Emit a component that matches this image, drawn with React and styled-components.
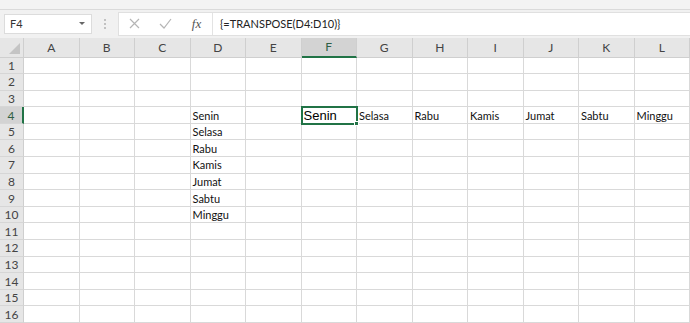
import React from "react";
import styled, { createGlobalStyle } from "styled-components";

const Global = createGlobalStyle`
  html, body { margin: 0; padding: 0; background: #fff; }
  body { width: 690px; height: 323px; overflow: hidden; font-family: "Lato", "Open Sans", sans-serif; }
`;

const Page = styled.div`
  width: 690px;
  height: 323px;
  display: flex;
  flex-direction: column;
  overflow: hidden;
`;

const RibbonEdge = styled.div`
  height: 9px;
  background: #f3f3f3;
  border-bottom: 1px solid #dadada;
`;

const FormulaRow = styled.div`
  height: 28px;
  background: #f1f1f1;
  display: flex;
  align-items: center;
  padding: 0 0 0 4px;
  box-sizing: border-box;
`;

const NameBox = styled.div`
  width: 88px;
  height: 20px;
  flex-shrink: 0;
  box-sizing: border-box;
  background: #fff;
  border: 1px solid #dcdcdc;
  display: flex;
  align-items: center;
  justify-content: space-between;
  padding: 0 6px 0 5px;
  font-family: "Lato", sans-serif;
  font-size: 11px;
  color: #333;
`;

const Caret = styled.span`
  width: 0;
  height: 0;
  border-left: 3px solid transparent;
  border-right: 3px solid transparent;
  border-top: 3px solid #666;
`;

const Grip = styled.div`
  width: 26px;
  flex-shrink: 0;
  display: flex;
  flex-direction: column;
  align-items: center;
  gap: 2px;
  & > span { width: 2px; height: 2px; background: #b0b0b0; border-radius: 1px; }
`;

const FormulaBox = styled.div`
  flex: 1;
  height: 22px;
  background: #fff;
  border: 1px solid #e0e0e0;
  border-right: none;
  display: flex;
  align-items: center;
`;

const IconSlot = styled.div`
  width: 31px;
  flex-shrink: 0;
  height: 100%;
  display: flex;
  align-items: center;
  justify-content: center;
  color: #b9b9b9;
`;

const Fx = styled.span`
  font-family: "Liberation Serif", serif;
  font-style: italic;
  font-size: 13px;
  color: #555;
`;

const FormulaText = styled.div`
  border-left: 1px solid #e3e3e3;
  height: 100%;
  display: flex;
  align-items: center;
  padding-left: 7px;
  font-family: "Lato", sans-serif;
  font-size: 11px;
  color: #222;
`;

const Sheet = styled.div`
  display: grid;
  grid-template-columns: 24px repeat(12, 55.5px);
  grid-template-rows: 20px repeat(16, 16.6px);
`;

const Corner = styled.div`
  background: #e6e6e6;
  border-right: 1px solid #cfcfcf;
  border-bottom: 1px solid #cfcfcf;
  box-sizing: border-box;
  position: relative;
  &::after {
    content: "";
    position: absolute;
    right: 3px;
    bottom: 3px;
    width: 0;
    height: 0;
    border-left: 11px solid transparent;
    border-bottom: 11px solid #c4c4c4;
  }
`;

const ColHead = styled.div`
  background: ${p => (p.$active ? "#d3d3d3" : "#e6e6e6")};
  border-right: 1px solid #cfcfcf;
  border-bottom: ${p => (p.$active ? "2px solid #217346" : "1px solid #cfcfcf")};
  box-sizing: border-box;
  display: flex;
  align-items: center;
  justify-content: center;
  font-family: "Lato", sans-serif;
  font-size: 12px;
  color: ${p => (p.$active ? "#2f5f45" : "#444")};
`;

const RowHead = styled.div`
  background: ${p => (p.$active ? "#d3d3d3" : "#e6e6e6")};
  border-right: ${p => (p.$active ? "2px solid #217346" : "1px solid #cfcfcf")};
  border-bottom: 1px solid #d6d6d6;
  box-sizing: border-box;
  display: flex;
  align-items: center;
  justify-content: center;
  font-family: "Lato", sans-serif;
  font-size: 12px;
  color: ${p => (p.$active ? "#2f5f45" : "#444")};
`;

const Cell = styled.div`
  border-right: 1px solid #d9d9d9;
  border-bottom: 1px solid #d9d9d9;
  box-sizing: border-box;
  display: flex;
  align-items: center;
  padding-left: 2px;
  font-family: "Lato", "Open Sans", sans-serif;
  font-size: 11px;
  color: #111;
  white-space: nowrap;
  position: relative;
`;

const ActiveCell = styled(Cell)`
  outline: 2px solid #217346;
  outline-offset: -1px;
  z-index: 2;
  font-family: "Liberation Sans", Arial, sans-serif;
  font-size: 13px;
  color: #000;
  &::after {
    content: "";
    position: absolute;
    right: -3px;
    bottom: -3px;
    width: 5px;
    height: 5px;
    background: #217346;
    border: 1px solid #fff;
    box-sizing: border-box;
  }
`;

const cols = ["A", "B", "C", "D", "E", "F", "G", "H", "I", "J", "K", "L"];
const days = ["Senin", "Selasa", "Rabu", "Kamis", "Jumat", "Sabtu", "Minggu"];

function cellValue(r, c) {
  if (c === 3 && r >= 4 && r <= 10) return days[r - 4];
  if (r === 4 && c >= 5) return days[c - 5];
  return "";
}

export default function App() {
  const rows = Array.from({ length: 16 }, (_, i) => i + 1);
  return (
    <Page>
      <Global />
      <RibbonEdge />
      <FormulaRow>
        <NameBox>
          <span>F4</span>
          <Caret />
        </NameBox>
        <Grip>
          <span />
          <span />
          <span />
        </Grip>
        <FormulaBox>
          <IconSlot>
            <svg width="11" height="11" viewBox="0 0 11 11">
              <path d="M1 1 L10 10 M10 1 L1 10" stroke="#b5b5b5" strokeWidth="1.2" fill="none" />
            </svg>
          </IconSlot>
          <IconSlot>
            <svg width="13" height="11" viewBox="0 0 13 11">
              <path d="M1 6 L5 10 L12 1" stroke="#b5b5b5" strokeWidth="1.2" fill="none" />
            </svg>
          </IconSlot>
          <IconSlot>
            <Fx>fx</Fx>
          </IconSlot>
          <FormulaText>{"{=TRANSPOSE(D4:D10)}"}</FormulaText>
        </FormulaBox>
      </FormulaRow>
      <Sheet>
        <Corner />
        {cols.map((c, i) => (
          <ColHead key={c} $active={i === 5}>
            {c}
          </ColHead>
        ))}
        {rows.map(r => (
          <React.Fragment key={r}>
            <RowHead $active={r === 4}>{r}</RowHead>
            {cols.map((c, ci) =>
              r === 4 && ci === 5 ? (
                <ActiveCell key={c}>{cellValue(r, ci)}</ActiveCell>
              ) : (
                <Cell key={c}>{cellValue(r, ci)}</Cell>
              )
            )}
          </React.Fragment>
        ))}
      </Sheet>
    </Page>
  );
}
